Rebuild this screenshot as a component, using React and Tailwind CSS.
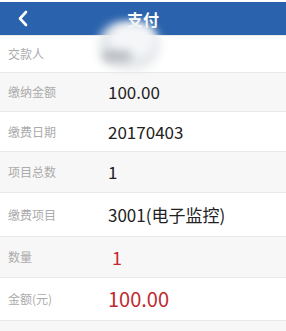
import React from "react";

const font = { fontFamily: '"Noto Sans CJK SC", "Noto Sans", sans-serif' };

function Row({ label, children, white, h, vcls = "" }) {
  return (
    <div
      className={`flex items-center ${h} ${
        white ? "bg-white border-y border-[#e9e9e9]" : "bg-[#f7f7f7]"
      }`}
    >
      <div className="w-[100px] pl-[8px] text-[12px] text-[#ababab]">{label}</div>
      <div className={`pl-[8px] ${vcls}`}>{children}</div>
    </div>
  );
}

export default function App() {
  return (
    <div className="w-[286px] h-[331px] bg-[#f7f7f7] relative overflow-hidden" style={font}>
      <div className="h-[2px] bg-white" />
      <div className="h-[33px] bg-[#2a62ad] flex items-center relative">
        <svg className="absolute left-[17px] top-[8px]" width="12" height="17" viewBox="0 0 12 17">
          <path d="M9 2 L3 8.5 L9 15" fill="none" stroke="white" strokeWidth="2.6" strokeLinecap="round" strokeLinejoin="round" />
        </svg>
        <div className="w-full text-center text-white text-[16px] font-bold">支付</div>
      </div>
      <Row label="交款人" white h="h-[38px]" />
      <Row label="缴纳金额" h="h-[38px]" vcls="text-[17px] text-[#222]">100.00</Row>
      <Row label="缴费日期" white h="h-[41px]" vcls="text-[17px] text-[#222]">20170403</Row>
      <Row label="项目总数" h="h-[40px]" vcls="text-[17px] text-[#222]">1</Row>
      <Row label="缴费项目" white h="h-[45px]" vcls="text-[17px] text-[#222]">3001(电子监控)</Row>
      <Row label="数量" h="h-[40px]" vcls="text-[18px] text-[#c8262b] pl-[12px]">1</Row>
      <Row label="金额(元)" white h="h-[44px]" vcls="text-[20px] text-[#c02a2f] pl-[3px]">100.00</Row>
      <div className="absolute left-[98px] top-[22px] w-[62px] h-[48px] rounded-full bg-[#e4e7ea] blur-[5px] opacity-90" />
      <div className="absolute left-[110px] top-[24px] w-[44px] h-[32px] rounded-full bg-[#f4f6f8] blur-[4px]" />
      <div className="absolute left-[102px] top-[50px] w-[30px] h-[12px] rounded-full bg-[#a9adb2] blur-[4px] opacity-70" />
    </div>
  );
}
